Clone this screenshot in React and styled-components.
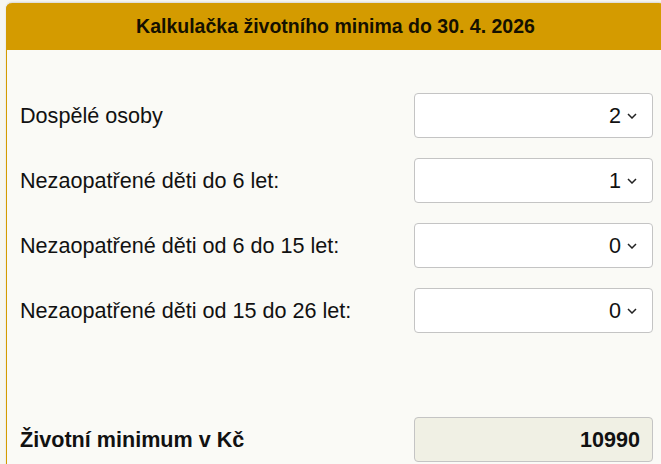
/* ------------------------- External Dependencies -------------------------- */
import React from 'react'
import styled, { createGlobalStyle } from 'styled-components'

/* --------------------------- Styled Components ---------------------------- */
const GlobalStyle = createGlobalStyle`
  html, body {
    margin: 0;
    padding: 0;
    background: #f6f6f1;
    overflow: hidden;
  }
  body {
    font-family: "Liberation Sans", Arial, sans-serif;
    color: #111;
  }
`

const Page = styled.div`
  width: 661px;
  height: 464px;
  overflow: hidden;
  padding: 3px 0 0 6px;
  box-sizing: border-box;
`

const Card = styled.section`
  width: 658px;
  min-height: 500px;
  background: #fafaf6;
  border-left: 1px solid #d49b00;
  border-radius: 6px 6px 0 0;
  box-shadow: 0 -1px 2px rgba(0, 0, 0, 0.12);
`

const Header = styled.header`
  height: 47px;
  background: #d49b00;
  border-radius: 6px 6px 0 0;
  display: flex;
  align-items: center;
  justify-content: center;
  font-weight: bold;
  font-size: 19.5px;
  color: #141000;
  margin-left: -1px;
`

const Body = styled.div`
  padding: 43px 12px 0 13px;
  display: flex;
  flex-direction: column;
  gap: 20px;
`

const Row = styled.div`
  display: flex;
  align-items: center;
  justify-content: space-between;
  margin-top: ${p => (p.$result ? '64px' : '0')};
`

const Label = styled.label`
  font-size: 21.6px;
  font-weight: ${p => (p.$bold ? 'bold' : 'normal')};
`

const Select = styled.div`
  width: 239px;
  height: 45px;
  box-sizing: border-box;
  background: #fff;
  border: 1px solid #c4c4c4;
  border-radius: 4px;
  display: flex;
  align-items: center;
  justify-content: flex-end;
  gap: 6px;
  padding-right: 15px;
  font-size: 21.6px;
  color: #111;
`

const Output = styled.div`
  width: 239px;
  height: 45px;
  box-sizing: border-box;
  background: #f0f0e4;
  border: 1px solid #c4c4c4;
  border-radius: 4px;
  display: flex;
  align-items: center;
  justify-content: flex-end;
  padding-right: 12px;
  font-size: 21.6px;
  font-weight: bold;
`

/* ------------------------------- Component -------------------------------- */
const Chevron = () => (
  <svg width="10" height="6" viewBox="0 0 10 6">
    <path d="M1 1 L5 5 L9 1" fill="none" stroke="#222" strokeWidth="1.5" />
  </svg>
)

const rows = [
  { label: 'Dospělé osoby', value: 2 },
  { label: 'Nezaopatřené děti do 6 let:', value: 1 },
  { label: 'Nezaopatřené děti od 6 do 15 let:', value: 0 },
  { label: 'Nezaopatřené děti od 15 do 26 let:', value: 0 },
]

const App = () => (
  <Page>
    <GlobalStyle />
    <Card>
      <Header>Kalkulačka životního minima do 30. 4. 2026</Header>
      <Body>
        {rows.map((row, i) => (
          <Row key={i}>
            <Label>{row.label}</Label>
            <Select>
              {row.value}
              <Chevron />
            </Select>
          </Row>
        ))}
        <Row $result>
          <Label $bold>Životní minimum v Kč</Label>
          <Output>10990</Output>
        </Row>
      </Body>
    </Card>
  </Page>
)

/* ---------------------------- Export Package ------------------------------ */
export default App
